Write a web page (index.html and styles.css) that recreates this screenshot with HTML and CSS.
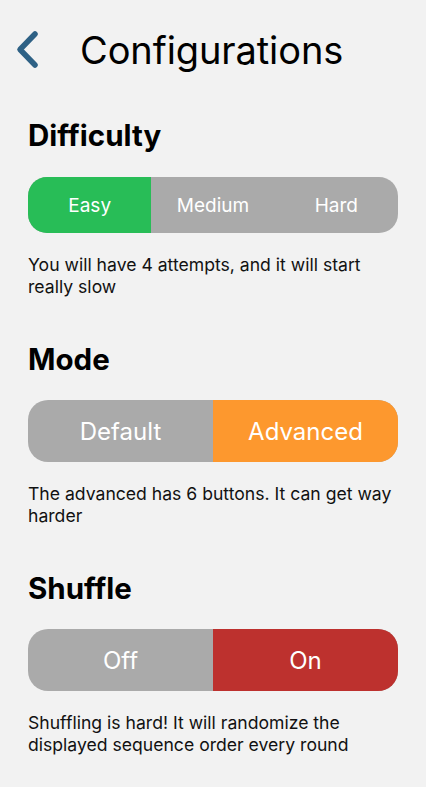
FILE: index.html
```html
<!DOCTYPE html>
<html>
<head>
<meta charset="utf-8">
<link rel="stylesheet" href="styles.css">
</head>
<body>
<div class="screen">
  <header class="nav">
    <svg class="back" width="26" height="40" viewBox="0 0 26 40">
      <polyline points="20,4 5,19.5 20,35" fill="none" stroke="#2e6185" stroke-width="5.5" stroke-linecap="round" stroke-linejoin="round"/>
    </svg>
    <h1 class="title">Configurations</h1>
  </header>

  <section class="group first">
    <h2 class="heading">Difficulty</h2>
    <div class="seg seg-small">
      <div class="opt on-green">Easy</div>
      <div class="opt">Medium</div>
      <div class="opt">Hard</div>
    </div>
    <p class="desc">You will have 4 attempts, and it will start really slow</p>
  </section>

  <section class="group">
    <h2 class="heading">Mode</h2>
    <div class="seg seg-large">
      <div class="opt">Default</div>
      <div class="opt on-orange">Advanced</div>
    </div>
    <p class="desc">The advanced has 6 buttons. It can get way harder</p>
  </section>

  <section class="group">
    <h2 class="heading">Shuffle</h2>
    <div class="seg seg-large">
      <div class="opt">Off</div>
      <div class="opt on-red">On</div>
    </div>
    <p class="desc">Shuffling is hard! It will randomize the displayed sequence order every round</p>
  </section>
</div>
</body>
</html>
```

FILE: styles.css
```css
* { box-sizing: border-box; }
html, body {
  margin: 0;
  padding: 0;
  background: #f2f2f2;
}
body {
  font-family: Inter, "Noto Sans", sans-serif;
  color: #000;
  width: 426px;
  height: 787px;
  overflow: hidden;
}
.screen {
  padding: 0 28px;
}
.nav {
  display: flex;
  align-items: center;
  padding-top: 27px;
  height: 73px;
}
.back {
  display: block;
  margin-left: -13px;
  margin-right: 39px;
}
.title {
  margin: 0;
  font-size: 38px;
  line-height: 46px;
  font-weight: 400;
  letter-spacing: -0.1px;
}
.group {
  margin-top: 43px;
}
.group.first {
  margin-top: 44px;
}
.heading {
  margin: 0;
  font-size: 29.5px;
  line-height: 36px;
  font-weight: 700;
  letter-spacing: 0;
}
.seg {
  margin-top: 23px;
  display: flex;
  border-radius: 19px;
  overflow: hidden;
  background: #aaaaaa;
  width: 370px;
}
.first .seg { margin-top: 24px; }
.seg-small { height: 56px; }
.seg-large { height: 62px; border-radius: 20px; }
.opt {
  flex: 1 1 0;
  display: flex;
  align-items: center;
  justify-content: center;
  color: #fff;
}
.seg-small .opt { font-size: 19px; }
.seg-large .opt { font-size: 24px; }
.on-green { background: #28bd57; }
.on-orange { background: #fd982e; }
.on-red { background: #bd312e; }
.desc {
  margin: 21px 0 0;
  font-size: 17.6px;
  line-height: 22px;
  color: #111;
}
```
